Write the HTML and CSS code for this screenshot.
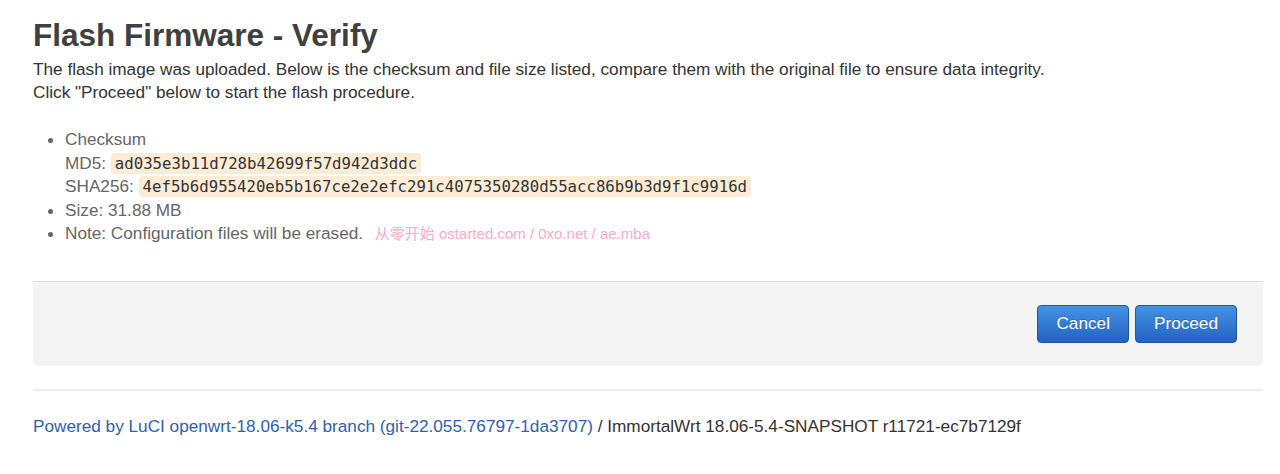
FILE: index.html
```html
<!DOCTYPE html>
<html>
<head>
<meta charset="utf-8">
<link rel="stylesheet" href="styles.css">
</head>
<body>
<div class="page">
  <h2 class="title">Flash Firmware - Verify</h2>
  <p class="intro">The flash image was uploaded. Below is the checksum and file size listed, compare them with the original file to ensure data integrity.<br>Click "Proceed" below to start the flash procedure.</p>
  <ul class="info">
    <li>Checksum<br>MD5: <code>ad035e3b11d728b42699f57d942d3ddc</code><br>SHA256: <code>4ef5b6d955420eb5b167ce2e2efc291c4075350280d55acc86b9b3d9f1c9916d</code></li>
    <li>Size: 31.88 MB</li>
    <li>Note: Configuration files will be erased. <span class="wm">从零开始 ostarted.com / 0xo.net / ae.mba</span></li>
  </ul>
  <div class="actions">
    <button class="btn">Cancel</button>
    <button class="btn">Proceed</button>
  </div>
  <hr class="rule">
  <footer class="foot"><a href="#">Powered by LuCI openwrt-18.06-k5.4 branch (git-22.055.76797-1da3707)</a> / ImmortalWrt 18.06-5.4-SNAPSHOT r11721-ec7b7129f</footer>
</div>
</body>
</html>
```
FILE: styles.css
```css
html, body { margin: 0; padding: 0; background: #fff; }
body { font-family: "Liberation Sans", Arial, sans-serif; color: #404040; font-size: 17.2px; }
.page { padding: 16px 17px 0 33px; }
.title { margin: 0; font-size: 31.5px; line-height: 38px; font-weight: bold; color: #404040; }
.intro { margin: 4px 0 0; line-height: 23px; color: #333; }
.info { margin: 24px 0 0; padding-left: 32px; line-height: 23.5px; color: #666; }
.info code { font-family: "DejaVu Sans Mono", monospace; font-size: 15.7px; color: #333; background: #fcecd6; border-radius: 4px; padding: 1px 4px; }
.wm { font-size: 15px; color: #ffaac6; margin-left: 7px; font-family: "Liberation Sans", "Noto Sans CJK SC", sans-serif; }
.actions { margin-top: 35px; background: #f4f4f4; border-top: 1px solid #dcdcdc; border-radius: 0 0 6px 6px; padding: 23px 26px 23px 0; display: flex; justify-content: flex-end; gap: 6px; }
.btn { font-family: "Liberation Sans", Arial, sans-serif; font-size: 17.2px; color: #fff; height: 38px; padding: 0 18px; border: 1px solid #1d54a6; border-radius: 4px; background: linear-gradient(#4593e2, #2462c3); text-shadow: 0 -1px 0 rgba(0,0,0,0.2); }
.rule { margin: 23px 0 0; border: 0; border-top: 2px solid #eee; }
.foot { margin-top: 25px; color: #333; }
.foot a { color: #2d5fb4; text-decoration: none; }
```
